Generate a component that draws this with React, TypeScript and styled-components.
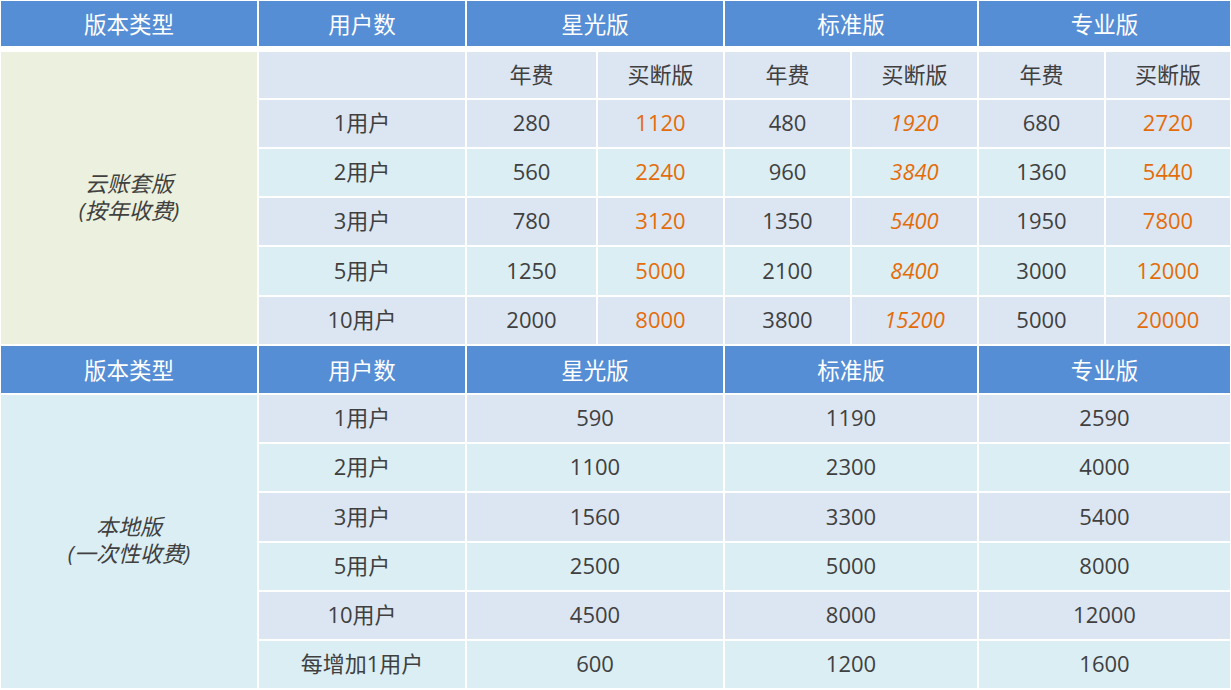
import React from "react";
import styled, { createGlobalStyle, css } from "styled-components";

const GlobalStyle = createGlobalStyle`
  html, body { margin: 0; padding: 0; background: #ffffff; }
  body {
    font-family: "Open Sans", "Noto Sans CJK SC", sans-serif;
    -webkit-font-smoothing: antialiased;
  }
`;

const COLS = "256px 206px 129px 125px 125px 125px 125px 124px";

const BLUE = "#558ed5";
const ROW_A = "#dce6f2";
const ROW_B = "#dbeef4";
const OLIVE = "#ebf1de";
const TEXT = "#404040";
const ORANGE = "#e46c0a";

const Page = styled.div`
  padding: 1px 0 0 1px;
  width: 1230px;
`;

const Table = styled.div`
  display: flex;
  flex-direction: column;
  gap: 2px;
`;

const HeaderRow = styled.div<{ $height: number; $after?: number }>`
  display: grid;
  grid-template-columns: ${COLS};
  column-gap: 2px;
  height: ${(p) => p.$height}px;
  margin-bottom: ${(p) => p.$after ?? 0}px;
`;

const HeadCell = styled.div<{ $span?: number }>`
  grid-column: span ${(p) => p.$span ?? 1};
  background: ${BLUE};
  color: #ffffff;
  font-size: 22.5px;
  line-height: 1;
  display: flex;
  align-items: center;
  justify-content: center;
  padding-top: 3px;
  box-sizing: border-box;
`;

const Section = styled.div<{ $rows: string }>`
  display: grid;
  grid-template-columns: ${COLS};
  grid-template-rows: ${(p) => p.$rows};
  gap: 2px;
`;

const Cell = styled.div<{
  $bg: string;
  $span?: number;
  $orange?: boolean;
  $italic?: boolean;
}>`
  grid-column: span ${(p) => p.$span ?? 1};
  background: ${(p) => p.$bg};
  color: ${(p) => (p.$orange ? ORANGE : TEXT)};
  font-size: 22px;
  line-height: 1;
  display: flex;
  align-items: center;
  justify-content: center;
  padding-bottom: 3px;
  box-sizing: border-box;
  ${(p) =>
    p.$italic &&
    css`
      font-style: italic;
    `}
`;

const GroupCell = styled.div<{ $bg: string; $rows: number }>`
  grid-row: span ${(p) => p.$rows};
  background: ${(p) => p.$bg};
  color: ${TEXT};
  font-size: 22px;
  font-style: italic;
  line-height: 27px;
  display: flex;
  align-items: center;
  justify-content: center;
  text-align: center;
  padding-bottom: 3px;
  box-sizing: border-box;
  white-space: nowrap;
`;

const cloudRows = [
  { u: "1用户", v: ["280", "1120", "480", "1920", "680", "2720"], bg: ROW_A },
  { u: "2用户", v: ["560", "2240", "960", "3840", "1360", "5440"], bg: ROW_B },
  { u: "3用户", v: ["780", "3120", "1350", "5400", "1950", "7800"], bg: ROW_A },
  { u: "5用户", v: ["1250", "5000", "2100", "8400", "3000", "12000"], bg: ROW_B },
  { u: "10用户", v: ["2000", "8000", "3800", "15200", "5000", "20000"], bg: ROW_A },
];

const localRows = [
  { u: "1用户", v: ["590", "1190", "2590"], bg: ROW_A },
  { u: "2用户", v: ["1100", "2300", "4000"], bg: ROW_B },
  { u: "3用户", v: ["1560", "3300", "5400"], bg: ROW_A },
  { u: "5用户", v: ["2500", "5000", "8000"], bg: ROW_B },
  { u: "10用户", v: ["4500", "8000", "12000"], bg: ROW_A },
  { u: "每增加1用户", v: ["600", "1200", "1600"], bg: ROW_B },
];

function Header({ height, after }: { height: number; after?: number }) {
  return (
    <HeaderRow $height={height} $after={after}>
      <HeadCell>版本类型</HeadCell>
      <HeadCell>用户数</HeadCell>
      <HeadCell $span={2}>星光版</HeadCell>
      <HeadCell $span={2}>标准版</HeadCell>
      <HeadCell $span={2}>专业版</HeadCell>
    </HeaderRow>
  );
}

export default function App() {
  return (
    <Page>
      <GlobalStyle />
      <Table>
        <Header height={45} after={4} />
        <Section $rows="46px 47px 47px 47px 48px 47px">
          <GroupCell $bg={OLIVE} $rows={6}>
            <span>
              云账套版
              <br />
              (按年收费)
            </span>
          </GroupCell>
          <Cell $bg={ROW_A} />
          <Cell $bg={ROW_A}>年费</Cell>
          <Cell $bg={ROW_A}>买断版</Cell>
          <Cell $bg={ROW_A}>年费</Cell>
          <Cell $bg={ROW_A}>买断版</Cell>
          <Cell $bg={ROW_A}>年费</Cell>
          <Cell $bg={ROW_A}>买断版</Cell>
          {cloudRows.map((r) => (
            <React.Fragment key={r.u}>
              <Cell $bg={r.bg}>{r.u}</Cell>
              {r.v.map((val, i) => (
                <Cell
                  key={i}
                  $bg={r.bg}
                  $orange={i % 2 === 1}
                  $italic={i === 3}
                >
                  {val}
                </Cell>
              ))}
            </React.Fragment>
          ))}
        </Section>
        <Header height={47} />
        <Section $rows="47px 47px 48px 47px 47px 47px">
          <GroupCell $bg={ROW_B} $rows={6}>
            <span>
              本地版
              <br />
              (一次性收费)
            </span>
          </GroupCell>
          {localRows.map((r) => (
            <React.Fragment key={r.u}>
              <Cell $bg={r.bg}>{r.u}</Cell>
              {r.v.map((val, i) => (
                <Cell key={i} $bg={r.bg} $span={2}>
                  {val}
                </Cell>
              ))}
            </React.Fragment>
          ))}
        </Section>
      </Table>
    </Page>
  );
}
